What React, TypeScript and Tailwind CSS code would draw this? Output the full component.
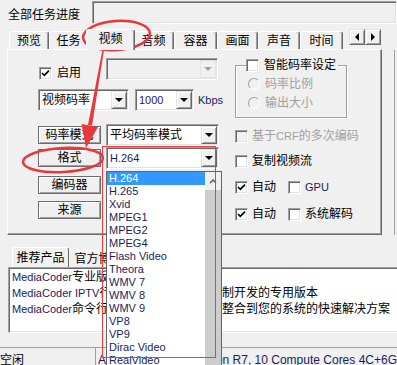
import React from 'react';

const sunken =
  'border border-t-[#a0a0a0] border-l-[#a0a0a0] border-r-white border-b-white shadow-[inset_1px_1px_0_#696969,inset_-1px_-1px_0_#e3e3e3]';
const raised =
  'border border-t-[#e3e3e3] border-l-[#e3e3e3] border-r-[#696969] border-b-[#696969] shadow-[inset_1px_1px_0_#fff,inset_-1px_-1px_0_#a0a0a0]';
const latin = 'text-[11px] text-[#1c1c5c]';

const formats = [
  'H.264', 'H.265', 'Xvid', 'MPEG1', 'MPEG2', 'MPEG4', 'Flash Video', 'Theora',
  'WMV 7', 'WMV 8', 'WMV 9', 'VP8', 'VP9', 'Dirac Video', 'RealVideo',
];

const Down = ({ color }: { color: string }) => (
  <div className={`w-0 h-0 border-x-4 border-x-transparent border-t-4 ${color}`} />
);

function Combo({ w, children, disabled }: { w: string; children?: React.ReactNode; disabled?: boolean }) {
  return (
    <div className={`${w} h-[22px] shrink-0 flex items-center p-[1px] ${sunken} ${disabled ? 'bg-[#f0f0f0]' : 'bg-white'}`}>
      <div className="flex-1 min-w-0 pl-[2px] whitespace-nowrap overflow-hidden">{children}</div>
      <div className={`w-[16px] h-full flex items-center justify-center bg-[#f0f0f0] ${disabled ? 'border border-[#e3e3e3]' : raised}`}>
        <Down color={disabled ? 'border-t-[#a0a0a0]' : 'border-t-black'} />
      </div>
    </div>
  );
}

function Check({ checked, disabled }: { checked?: boolean; disabled?: boolean }) {
  return (
    <div className={`w-[13px] h-[13px] shrink-0 flex items-center justify-center ${sunken} ${disabled ? 'bg-[#f0f0f0]' : 'bg-white'}`}>
      {checked && (
        <svg width="11" height="11" viewBox="0 0 11 11">
          <path d="M2 5 L4.3 7.3 L9 2.6" fill="none" stroke="#000" strokeWidth="1.7" />
        </svg>
      )}
    </div>
  );
}

const Radio = () => (
  <div className="w-[12px] h-[12px] shrink-0 rounded-full border border-t-[#a0a0a0] border-l-[#a0a0a0] border-r-white border-b-white bg-[#f0f0f0]" />
);

const Btn = ({ children }: { children: React.ReactNode }) => (
  <div className="w-[63px] h-[18px] shrink-0 flex items-center justify-center bg-[#f0f0f0] border border-[#6d6d6d] shadow-[inset_1px_1px_0_#fff,inset_-1px_-1px_0_#a0a0a0]">
    {children}
  </div>
);

function Tab({ label, w, active }: { label: string; w: string; active?: boolean }) {
  return (
    <div
      className={`${w} ${active ? 'relative z-10 h-[21px] -mx-[2px] -mb-px pb-[3px]' : 'h-[18px]'} shrink-0 flex items-center justify-center bg-[#f0f0f0] border-t border-l border-r border-t-white border-l-white border-r-[#696969] rounded-t-[3px] shadow-[inset_-1px_0_0_#a0a0a0]`}
    >
      {label}
    </div>
  );
}

function ScrollBtn({ left }: { left?: boolean }) {
  return (
    <div className={`w-[16px] h-[16px] flex items-center justify-center bg-[#f0f0f0] ${raised}`}>
      <div className={`w-0 h-0 border-y-4 border-y-transparent ${left ? 'border-r-4 border-r-black' : 'border-l-4 border-l-black'}`} />
    </div>
  );
}

export default function App() {
  return (
    <div className="relative w-[397px] h-[365px] overflow-hidden bg-[#f0f0f0] text-[12px] leading-[14px] text-black font-['Liberation_Sans','Noto_Sans_CJK_SC',sans-serif]">
      {/* 进度 */}
      <div className="flex h-[24px]">
        <div className="w-[92px] pl-[8px] pt-[8px] whitespace-nowrap">全部任务进度</div>
        <div className={`flex-1 mt-[1px] h-[23px] ${sunken}`} />
      </div>

      {/* 选项卡 */}
      <div className="flex items-end h-[25px] pl-[9px]">
        <Tab w="w-[40px]" label="预览" />
        <Tab w="w-[39px]" label="任务" />
        <Tab w="w-[49px]" label="视频" active />
        <Tab w="w-[41px]" label="音频" />
        <Tab w="w-[43px]" label="容器" />
        <Tab w="w-[41px]" label="画面" />
        <Tab w="w-[42px]" label="声音" />
        <Tab w="w-[43px]" label="时间" />
        <div className="ml-[6px] self-start mt-[5px] flex">
          <ScrollBtn left />
          <ScrollBtn />
        </div>
      </div>

      {/* 视频面板 */}
      <div className="flex h-[186px]">
        <div className="relative z-0 ml-[7px] w-[375px] h-full flex border-t border-l border-r border-b border-t-white border-l-white border-r-[#696969] border-b-[#696969] shadow-[inset_-1px_-1px_0_#a0a0a0]">
          <div className="ml-[30px] w-[197px] flex flex-col">
            <div className="mt-[8px] h-[22px] flex items-start">
              <div className="w-[68px] mt-[8px] pl-[1px] flex items-center gap-[5px]">
                <Check checked />
                <span>启用</span>
              </div>
              <Combo w="w-[112px]" disabled />
            </div>
            <div className="mt-[9px] flex items-center">
              <Combo w="w-[91px]">视频码率</Combo>
              <div className="ml-[6px]">
                <Combo w="w-[59px]"><span className={latin}>1000</span></Combo>
              </div>
              <span className={`ml-[4px] ${latin}`}>Kbps</span>
            </div>
            <div className="mt-[13px] flex items-center gap-[5px]">
              <Btn>码率模式</Btn>
              <Combo w="w-[113px]">平均码率模式</Combo>
            </div>
            <div className="mt-[1px] flex items-center gap-[5px]">
              <Btn>格式</Btn>
              <Combo w="w-[113px]"><span className={latin}>H.264</span></Combo>
            </div>
            <div className="mt-[7px]"><Btn>编码器</Btn></div>
            <div className="mt-[7px]"><Btn>来源</Btn></div>
          </div>

          <div className="w-[125px] flex flex-col">
            <fieldset className="mt-[8px] w-[112px] h-[60px] border border-[#a0a0a0] shadow-[inset_1px_1px_0_#fff,1px_1px_0_#fff]">
              <legend className="ml-[10px] pr-[2px] h-[14px] flex items-center gap-[5px] bg-[#f0f0f0]">
                <Check />
                <span>智能码率设定</span>
              </legend>
              <div className="mt-[5px] pl-[12px] h-[14px] flex items-center gap-[5px] text-[#a0a0a0]">
                <Radio />
                <span>码率比例</span>
              </div>
              <div className="mt-[5px] pl-[12px] h-[14px] flex items-center gap-[5px] text-[#a0a0a0]">
                <Radio />
                <span>输出大小</span>
              </div>
            </fieldset>
            <div className="mt-[11px] h-[14px] flex items-center gap-[4px] text-[#a0a0a0]">
              <Check disabled />
              <span>基于<span className="text-[11px]">CRF</span>的多次编码</span>
            </div>
            <div className="mt-[11px] h-[14px] flex items-center gap-[4px]">
              <Check />
              <span>复制视频流</span>
            </div>
            <div className="mt-[12px] h-[14px] flex items-center">
              <div className="w-[53px] flex items-center gap-[4px]">
                <Check checked />
                <span>自动</span>
              </div>
              <div className="flex items-center gap-[4px]">
                <Check />
                <span className={latin}>GPU</span>
              </div>
            </div>
            <div className="mt-[13px] h-[14px] flex items-center">
              <div className="w-[53px] flex items-center gap-[4px]">
                <Check checked />
                <span>自动</span>
              </div>
              <div className="flex items-center gap-[4px]">
                <Check />
                <span>系统解码</span>
              </div>
            </div>
          </div>
        </div>
        <div className="ml-[12px] flex-1 border-l border-t border-l-[#a0a0a0] border-t-white" />
      </div>

      {/* 推荐产品 */}
      <div className="flex items-end h-[32px] pl-[12px]">
        <div className="w-[57px] h-[20px] flex items-center justify-center border-t border-l border-r border-t-white border-l-white border-r-[#696969] rounded-t-[3px]">
          推荐产品
        </div>
        <div className="w-[60px] h-[17px] flex items-center justify-center border-t border-r border-t-white border-r-[#696969] rounded-t-[3px]">
          官方博客
        </div>
      </div>
      <div className={`ml-[8px] w-[400px] h-[66px] bg-white pt-[1px] pl-[3px] ${sunken}`}>
        <div className="h-[16px] flex items-center whitespace-nowrap">
          <span className="text-[11px] text-[#1c1c5c]">MediaCoder</span>专业版简介
        </div>
        <div className="h-[16px] flex items-center whitespace-nowrap">
          <span className="w-[210px] overflow-hidden">
            <span className="text-[11px] text-[#1c1c5c]">MediaCoder IPTV</span>行业版：为<span className="text-[11px]">IPTV</span>行业定
          </span>
          <span>制开发的专用版本</span>
        </div>
        <div className="h-[16px] flex items-center whitespace-nowrap">
          <span className="w-[210px] overflow-hidden">
            <span className="text-[11px] text-[#1c1c5c]">MediaCoder</span>命令行版：可以轻松
          </span>
          <span>整合到您的系统的快速解决方案</span>
        </div>
      </div>

      {/* 状态栏 */}
      <div className="mt-[14px] flex h-[18px]">
        <div className="w-[97px] pt-[5px] border-t border-[#a0a0a0] whitespace-nowrap">空闲</div>
        <div className="flex-1 pl-[2px] pt-[5px] border-t border-l border-[#a0a0a0] flex whitespace-nowrap text-[#1c1c5c]">
          <span className="w-[118px] overflow-hidden">AMD A8-7600 Rade</span>
          <span>on R7, 10 Compute Cores 4C+6G</span>
        </div>
      </div>

      {/* 下拉列表 */}
      <div className="absolute left-[106px] top-[171px] w-[116px] h-[200px] border border-[#646464] bg-white flex">
        <div className="w-[98px] flex flex-col">
          {formats.map((f, i) => (
            <div
              key={f}
              className={`h-[13px] leading-[13px] pl-[2px] text-[11px] whitespace-nowrap ${i === 0 ? 'bg-[#3399ff] text-white' : 'text-[#1c1c5c]'}`}
            >
              {f}
            </div>
          ))}
        </div>
        <div className="flex-1 flex flex-col">
          <div className="h-[18px] bg-[#f0f0f0] flex items-center justify-center">
            <svg width="8" height="5" viewBox="0 0 8 5">
              <path d="M1 4 L4 1 L7 4" fill="none" stroke="#606060" strokeWidth="1.5" />
            </svg>
          </div>
          <div className="flex-1 bg-[#cdcdcd]" />
        </div>
      </div>

      {/* 标注 */}
      <div className="absolute left-[102px] top-[146px] w-[114px] h-[212px] border border-[#f03c3c]" />
      <svg className="absolute inset-0 pointer-events-none" width="397" height="365" viewBox="0 0 397 365">
        <ellipse cx="116.5" cy="35.5" rx="33.5" ry="14.5" fill="none" stroke="#e8383d" strokeWidth="2.5" transform="rotate(-4 116.5 35.5)" />
        <ellipse cx="63" cy="160" rx="40" ry="12" fill="none" stroke="#e8383d" strokeWidth="2.5" transform="rotate(-3 63 160)" />
        <polygon points="102.2,51 103.8,51 92,125.7 88,125" fill="#e8383d" />
        <polygon points="86,148 81.5,124 98,127" fill="#e8383d" />
      </svg>
    </div>
  );
}
